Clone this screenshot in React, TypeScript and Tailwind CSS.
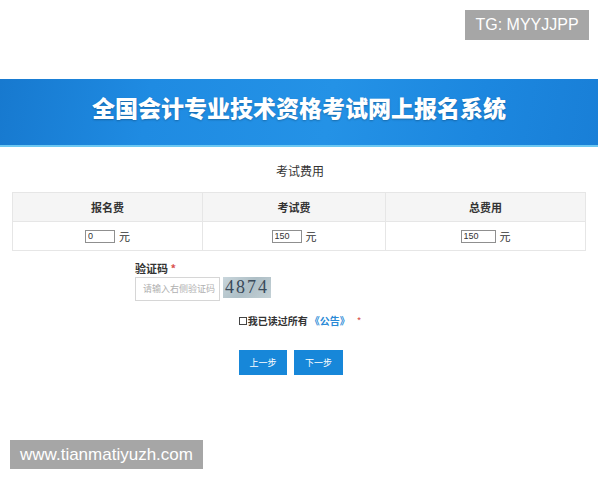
const cjk = { fontFamily: '"Microsoft YaHei", "Noto Sans CJK SC", sans-serif' };

const FeeCell = ({ value, width }: { value: string; width: string }) => (
  <div className="flex items-center justify-center gap-[4px] h-[28px] border-r border-[#e6e6e6] last:border-r-0">
    <input
      readOnly
      value={value}
      className={`${width} h-[13px] border border-[#8f8f8f] bg-white px-[2px] text-[9px] leading-none text-[#333] outline-none`}
      style={{ fontFamily: '"Liberation Sans", sans-serif' }}
    />
    <span className="text-[11px] text-[#333]">元</span>
  </div>
);

export default function App() {
  return (
    <div className="w-[600px] h-[480px] bg-white flex flex-col" style={cjk}>
      {/* corner tag */}
      <div className="flex justify-end pt-[10px] pr-[11px]">
        <div
          className="w-[124px] h-[30px] bg-[#a6a6a6] flex items-center justify-center text-white text-[16px] font-light"
          style={{ fontFamily: '"Liberation Sans", sans-serif' }}
        >
          TG: MYYJJPP
        </div>
      </div>

      {/* header banner */}
      <div
        className="mt-[39px] w-[598px] h-[68px] flex items-center justify-center pb-[10px] border-b-2 border-[#6cc8f2]"
        style={{
          background:
            "linear-gradient(100deg,#1779cf 0%,#1f8be2 25%,#2492e6 55%,#1c87df 80%,#197fd7 100%)",
        }}
      >
        <h1 className="text-white text-[23px] font-black [text-shadow:0_1px_2px_rgba(0,0,0,0.25)]">
          全国会计专业技术资格考试网上报名系统
        </h1>
      </div>

      {/* fees */}
      <div className="mt-[15px] text-center text-[12px] text-[#333]">考试费用</div>
      <div className="mt-[12px] ml-[12px] w-[574px] border border-[#e6e6e6]">
        <div className="grid grid-cols-[190px_183px_199px] bg-[#f5f5f5] border-b border-[#e6e6e6]">
          {["报名费", "考试费", "总费用"].map((h) => (
            <div
              key={h}
              className="h-[28px] flex items-center justify-center text-[11px] font-bold text-[#333] border-r border-[#e6e6e6] last:border-r-0"
            >
              {h}
            </div>
          ))}
        </div>
        <div className="grid grid-cols-[190px_183px_199px]">
          <FeeCell value="0" width="w-[30px]" />
          <FeeCell value="150" width="w-[30px]" />
          <FeeCell value="150" width="w-[35px]" />
        </div>
      </div>

      {/* captcha */}
      <div className="mt-[10px] ml-[135px] flex flex-col">
        <div className="text-[11px] font-bold text-[#333] leading-[14px]">
          验证码 <span className="text-[#d9534f]">*</span>
        </div>
        <div className="mt-[2px] flex items-center gap-[3px]">
          <div className="w-[85px] h-[24px] border border-[#d6d6d6] flex items-center pl-[7px] text-[9px] text-[#b0b0b0]">
            请输入右侧验证码
          </div>
          <div
            className="w-[48px] h-[21px] flex items-center justify-center text-[18px] tracking-[2px] text-[#3a4a5a] self-start"
            style={{
              fontFamily: '"Liberation Serif", serif',
              background: "linear-gradient(135deg,#c9d6dc,#aebfc6 50%,#c4d1d6)",
            }}
          >
            4874
          </div>
        </div>
      </div>

      {/* agreement */}
      <div className="mt-[12px] flex items-center justify-center text-[10px]">
        <span className="w-[8px] h-[8px] border border-[#444] bg-white mr-[1px]" />
        <span className="font-bold text-[#333]">我已读过所有</span>
        <span className="ml-[2px] font-bold text-[#2a8ad6]">《公告》</span>
        <span className="ml-[7px] text-[#d9534f]">*</span>
      </div>

      {/* steps */}
      <div className="mt-[22px] flex justify-center gap-[7px] pr-[18px]">
        <button className="w-[48px] h-[25px] bg-[#1787d9] text-white text-[9px]">上一步</button>
        <button className="w-[49px] h-[25px] bg-[#1787d9] text-white text-[9px]">下一步</button>
      </div>

      {/* footer tag */}
      <div className="mt-auto mb-[11px] ml-[10px]">
        <div
          className="w-[193px] h-[29px] bg-[#a6a6a6] flex items-center justify-center text-white text-[17px] font-light"
          style={{ fontFamily: '"Liberation Sans", sans-serif' }}
        >
          www.tianmatiyuzh.com
        </div>
      </div>
    </div>
  );
}
